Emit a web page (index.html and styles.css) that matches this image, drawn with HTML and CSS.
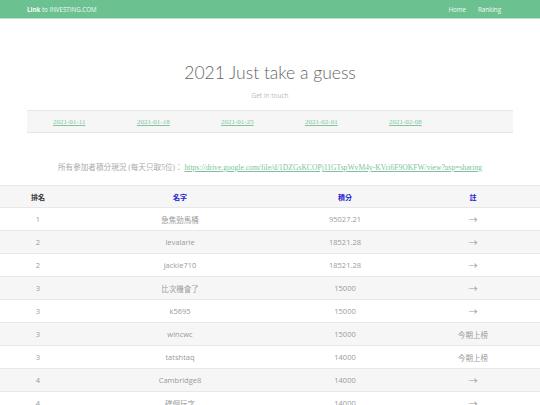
FILE: index.html
```html
<!DOCTYPE html>
<html>
<head>
<meta charset="utf-8">
<link rel="stylesheet" href="styles.css">
</head>
<body>
<nav class="navbar">
  <a class="brand" href="#"><b>Link</b> to INVESTING.COM</a>
  <div class="nav-links">
    <a href="#">Home</a>
    <a href="#">Ranking</a>
  </div>
</nav>
<header class="hero">
  <h1 class="title">2021 Just take a guess</h1>
  <p class="subtitle">Get in touch</p>
</header>
<div class="dates">
  <a href="#">2021-01-11</a>
  <a href="#">2021-01-18</a>
  <a href="#">2021-01-25</a>
  <a href="#">2021-02-01</a>
  <a href="#">2021-02-08</a>
</div>
<p class="notice">所有參加者積分現況 (每天只取5位)： <a href="#">https://drive.google.com/file/d/1DZGsKCOPj11GTspWvM4y-KVri6F9OKFW/view?usp=sharing</a></p>
<table class="rank">
  <colgroup><col class="c1"><col class="c2"><col class="c3"><col class="c4"></colgroup>
  <thead>
    <tr><th>排名</th><th><a href="#">名字</a></th><th><a href="#">積分</a></th><th><a href="#">註</a></th></tr>
  </thead>
  <tbody>
    <tr><td>1</td><td>急焦勁馬桶</td><td>95027.21</td><td class="arrow">→</td></tr>
    <tr><td>2</td><td>levalarie</td><td>18521.28</td><td class="arrow">→</td></tr>
    <tr><td>2</td><td>jackie710</td><td>18521.28</td><td class="arrow">→</td></tr>
    <tr><td>3</td><td>比次機會了</td><td>15000</td><td class="arrow">→</td></tr>
    <tr><td>3</td><td>k5695</td><td>15000</td><td class="arrow">→</td></tr>
    <tr><td>3</td><td>wincwc</td><td>15000</td><td>今期上榜</td></tr>
    <tr><td>3</td><td>tatshtaq</td><td>14000</td><td>今期上榜</td></tr>
    <tr><td>4</td><td>Cambridge8</td><td>14000</td><td class="arrow">→</td></tr>
    <tr><td>4</td><td>碟個玩字</td><td>14000</td><td class="arrow">→</td></tr>
  </tbody>
</table>
</body>
</html>
```
FILE: styles.css
```css
* { box-sizing: border-box; }
body {
  margin: 0;
  font-family: "Open Sans", "Noto Sans CJK TC", sans-serif;
  background: #fff;
  color: #999;
}
.navbar {
  height: 19px;
  background: #6cc191;
  border-bottom: 1px solid #b9e2ca;
  display: flex;
  align-items: center;
  justify-content: space-between;
  padding: 0 39px 0 27px;
}
.navbar a {
  color: #f2fbf6;
  text-decoration: none;
  font-size: 6.2px;
}
.brand b { font-weight: 700; }
.nav-links { display: flex; gap: 12px; }
.hero {
  text-align: center;
  padding-top: 42px;
}
.title {
  margin: 0;
  font-family: "Lato", sans-serif;
  font-weight: 300;
  font-size: 17.5px;
  line-height: 24px;
  color: #666;
}
.subtitle {
  margin: 6px 0 0;
  font-size: 6.5px;
  color: #bbb;
}
.dates {
  margin: 10px 27px 0;
  height: 23px;
  background: #f6f6f6;
  border-top: 1px solid #e6e6e6;
  border-bottom: 1px solid #e6e6e6;
  display: flex;
  align-items: center;
  padding-left: 26px;
  gap: 52px;
}
.dates a {
  font-family: "Liberation Serif", serif;
  font-size: 7px;
  color: #7fc69e;
  text-decoration: underline;
  width: 32px;
  white-space: nowrap;
}
.notice {
  margin: 28px 0 0;
  text-align: center;
  font-family: "Liberation Serif", "Noto Sans CJK TC", serif;
  font-size: 7.6px;
  color: #aaa;
}
.notice a { color: #7cc49b; }
.rank {
  margin-top: 13px;
  width: 100%;
  border-collapse: collapse;
  font-size: 7.5px;
}
.c1 { width: 76px; }
.c2 { width: 208px; }
.c3 { width: 122px; }
.c4 { width: 134px; }
.rank th, .rank td {
  text-align: center;
  height: 23px;
  padding: 0;
  border-top: 1px solid #e8e8e8;
}
.rank th {
  height: 22px;
  background: #f6f6f6;
  font-weight: 700;
  color: #333;
  font-size: 7px;
}
.rank th a { color: #1a1acc; text-decoration: none; }
.rank tbody tr:nth-child(even) td { background: #f6f6f6; }
.rank td { color: #9a9a9a; }
.rank td.arrow { font-size: 9px; }
```
